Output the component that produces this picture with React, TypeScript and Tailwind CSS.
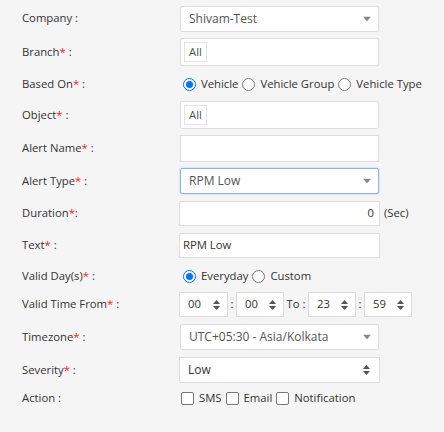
import React from "react";

const Req = () => <span className="text-[#ff2020]">*</span>;

function Label({ text, req, colon = " :" }: { text: string; req?: boolean; colon?: string }) {
    return (
        <div className="w-[158px] shrink-0 text-[#333]">
            {text}
            {req && <Req />}
            {colon}
        </div>
    );
}

function Row({ h, children }: { h: string; children: React.ReactNode }) {
    return <div className={`flex items-center ${h}`}>{children}</div>;
}

const Caret = () => (
    <svg width="8" height="5" viewBox="0 0 8 5" className="absolute right-[7px] top-1/2 -translate-y-1/2">
        <path d="M0 0h8L4 5z" fill="#888" />
    </svg>
);

const Spin = ({ className = "" }: { className?: string }) => (
    <svg width="7" height="10" viewBox="0 0 7 10" className={className}>
        <path d="M0 4L3.5 0 7 4z" fill="#555" />
        <path d="M0 6h7L3.5 10z" fill="#555" />
    </svg>
);

function Select2({ value, focus }: { value: string; focus?: boolean }) {
    return (
        <div
            className={`relative flex h-[26px] w-[199px] items-center rounded-[2px] border bg-white pl-[8px] text-[12px] text-[#555] ${
                focus ? "border-[#8bb4ec] shadow-[0_0_2px_rgba(90,150,230,0.5)]" : "border-[#ddd]"
            }`}
        >
            {value}
            <Caret />
        </div>
    );
}

function TagBox() {
    return (
        <div className="flex h-[28px] w-[199px] items-center rounded-[2px] border border-[#ddd] bg-white pl-[3px]">
            <span className="flex h-[20px] items-center border border-[#e4e4e4] px-[4px] text-[#555]">All</span>
        </div>
    );
}

function Radio({ checked, label }: { checked?: boolean; label: string }) {
    return (
        <label className="flex items-center text-[#333]">
            <span
                className={`mr-[5px] flex h-[13px] w-[13px] items-center justify-center rounded-full border ${
                    checked ? "border-[#0075ff]" : "border-[#767676]"
                } bg-white`}
            >
                {checked && <span className="h-[7px] w-[7px] rounded-full bg-[#0075ff]" />}
            </span>
            {label}
        </label>
    );
}

function Check({ label }: { label: string }) {
    return (
        <label className="mr-[4px] flex items-center text-[#333]">
            <span className="mr-[5px] h-[13px] w-[13px] rounded-[2px] border border-[#767676] bg-white" />
            {label}
        </label>
    );
}

function Num({ value, w = "w-[48px]" }: { value: string; w?: string }) {
    return (
        <div className={`flex h-[25px] ${w} items-center justify-between border border-[#ddd] bg-white pl-[8px] pr-[7px] text-[#333]`}>
            {value}
            <Spin />
        </div>
    );
}

export default function App() {
    return (
        <div
            className="h-[432px] w-[444px] bg-[#f5f5f5] pl-[22px] pt-[2px] text-[11.3px]"
            style={{ fontFamily: "'Open Sans', sans-serif" }}
        >
            <Row h="h-[33px]">
                <Label text="Company" />
                <Select2 value="Shivam-Test" />
            </Row>
            <Row h="h-[34px]">
                <Label text="Branch" req />
                <TagBox />
            </Row>
            <Row h="h-[30px]">
                <Label text="Based On" req />
                <div className="flex items-center gap-[4px] pl-[3px]">
                    <Radio checked label="Vehicle" />
                    <Radio label="Vehicle Group" />
                    <Radio label="Vehicle Type" />
                </div>
            </Row>
            <Row h="h-[32px]">
                <Label text="Object" req />
                <TagBox />
            </Row>
            <Row h="h-[34px]">
                <Label text="Alert Name" req />
                <div className="h-[27px] w-[199px] border border-[#ddd] bg-white" />
            </Row>
            <Row h="h-[32px]">
                <Label text="Alert Type" req />
                <Select2 value="RPM Low" focus />
            </Row>
            <Row h="h-[33px]">
                <Label text="Duration" req colon=":" />
                <div className="-ml-[1px] flex items-center">
                    <div className="flex h-[25px] w-[201px] items-center justify-end border border-[#ddd] bg-white pr-[5px] text-[#333]">
                        0
                    </div>
                    <span className="ml-[4px] text-[#333]">(Sec)</span>
                </div>
            </Row>
            <Row h="h-[31px]">
                <Label text="Text" req />
                <div className="-ml-[1px] flex h-[25px] w-[201px] items-center border border-[#ddd] bg-white pl-[3px] text-[#333]">
                    RPM Low
                </div>
            </Row>
            <Row h="h-[30px]">
                <Label text="Valid Day(s)" req />
                <div className="flex items-center gap-[4px] pl-[3px]">
                    <Radio checked label="Everyday" />
                    <Radio label="Custom" />
                </div>
            </Row>
            <Row h="h-[27px]">
                <Label text="Valid Time From" req />
                <div className="-ml-[1px] flex items-center text-[#333]">
                    <Num value="00" w="w-[49px]" />
                    <span className="w-[8px] text-center">:</span>
                    <Num value="00" />
                    <span className="w-[24px] text-center">To :</span>
                    <Num value="23" />
                    <span className="w-[8px] text-center">:</span>
                    <Num value="59" />
                </div>
            </Row>
            <Row h="h-[38px]">
                <Label text="Timezone" req />
                <Select2 value="UTC+05:30 - Asia/Kolkata" />
            </Row>
            <Row h="h-[28px]">
                <Label text="Severity" req />
                <div className="relative -ml-[1px] flex h-[26px] w-[201px] items-center border border-[#ddd] bg-white pl-[8px] text-[12px] text-[#333]">
                    Low
                    <Spin className="absolute right-[9px] top-1/2 -translate-y-1/2" />
                </div>
            </Row>
            <Row h="h-[28px]">
                <Label text="Action" />
                <div className="flex items-center pl-[1px]">
                    <Check label="SMS" />
                    <Check label="Email" />
                    <Check label="Notification" />
                </div>
            </Row>
        </div>
    );
}
